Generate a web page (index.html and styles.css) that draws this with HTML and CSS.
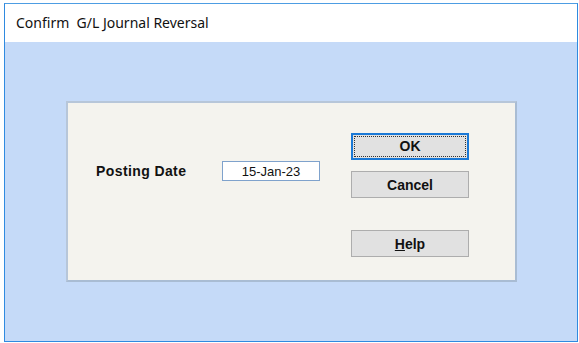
FILE: index.html
```html
<html lang="en">
  <head>
    <meta charset="utf-8">
    <title>Confirm G/L Journal Reversal</title>
    <link rel="stylesheet" href="styles.css">
  </head>
  <body>
    <div class="window">
      <div class="titlebar">Confirm&nbsp; G/L Journal Reversal</div>
      <div class="client">
        <div class="panel">
          <div class="fields">
            <span class="label">Posting Date</span>
            <input class="date" value="15-Jan-23">
          </div>
          <div class="buttons">
            <button class="btn ok" type="button"><span class="focus">OK</span></button>
            <button class="btn" type="button">Cancel</button>
            <button class="btn help" type="button"><u>H</u>elp</button>
          </div>
        </div>
      </div>
    </div>
  </body>
</html>
```

FILE: styles.css
```css
body        {  margin: 0;  background: #ffffff;  }
.window     {  box-sizing: border-box;  width: 574px;  height: 339px;  margin: 3px 0 0 4px;  border: 1px solid #2f8ae0;  border-top-color: #4d9de3;  display: flex;  flex-direction: column;  }
.titlebar   {  height: 38px;  background: #ffffff;  padding-left: 11px;  line-height: 37px;  font-family: "Noto Sans", sans-serif;  font-size: 14px;  color: #111111;  }
.client     {  flex: 1;  background: #c5daf8;  padding: 59px 0 0 61px;  }
.panel      {  box-sizing: border-box;  width: 451px;  height: 181px;  background: #f4f3ee;  border: 2px solid #a9bcd3;  border-top-color: #b7c6d9;  border-left-color: #b7c6d9;  display: flex;  }
.fields     {  display: flex;  align-items: center;  padding: 58px 0 0 28px;  height: 20px;  width: 255px;  }
.label      {  font-family: "Liberation Sans", Arial, sans-serif;  font-weight: bold;  font-size: 14px;  letter-spacing: 0.4px;  color: #111111;  width: 126px;  }
.date       {  box-sizing: border-box;  width: 98px;  height: 20px;  border: 1px solid #7fa2cc;  background: #ffffff;  text-align: center;  font-family: "Liberation Sans", Arial, sans-serif;  font-size: 13px;  color: #111111;  padding: 0;  outline: none;  }
.buttons    {  display: flex;  flex-direction: column;  padding-top: 30px;  }
.btn        {  box-sizing: border-box;  width: 118px;  height: 27px;  margin-bottom: 11px;  background: #e1e1e1;  border: 1px solid #adadad;  font-family: "Liberation Sans", Arial, sans-serif;  font-weight: bold;  font-size: 14px;  color: #111111;  padding: 0;  }
.btn.ok     {  border: 2px solid #1b79d6;  padding: 1px;  }
.btn.ok .focus {  display: block;  height: 100%;  box-sizing: border-box;  border: 1px dotted #333333;  line-height: 19px;  }
.btn.help   {  margin-top: 21px;  }
```
